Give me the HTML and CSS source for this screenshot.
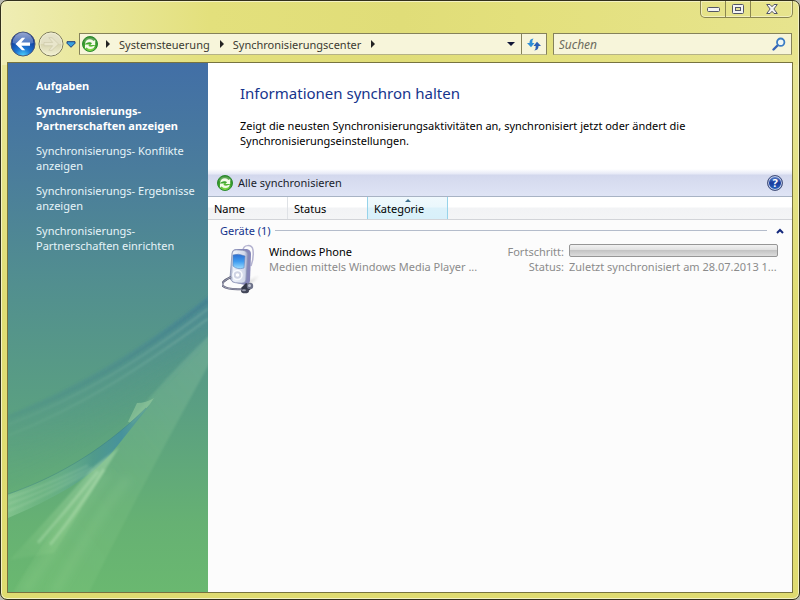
FILE: index.html
```
<!DOCTYPE html>
<html lang="de">
<head>
<meta charset="utf-8">
<title>Synchronisierungscenter</title>
<meta name="viewport" content="width=device-width, initial-scale=1">
<link rel="stylesheet" href="styles.css">
</head>
<body>
<svg width="0" height="0" class="defs" aria-hidden="true">
  <defs>
    <radialGradient id="green" cx=".5" cy=".9" r=".9"><stop offset="0" stop-color="#8fe04a"/><stop offset=".5" stop-color="#3fa62c"/><stop offset="1" stop-color="#2c8427"/></radialGradient>
    <symbol id="sync" viewBox="0 0 16 16">
      <circle cx="8" cy="8" r="7.500" fill="url(#green)" stroke="#2b8a30"/>
      <path d="M2 6a6.300 6.300 0 0 1 12 0Q8 8 2 6z" fill="#fff" opacity=".22"/>
      <path d="M3 8Q3.500 3.500 8 3.300 10.300 3.400 11.500 5L13.200 4V9H8.300L10 7.300Q8.500 5.300 6.200 6.200 4.500 7 3 8z" fill="#f6fbe8"/>
      <path d="M13 9.500Q12 13 8.500 13 6 13 4.600 11.500L3 12.700V8.500H7.600L6.300 9.700Q8 11.200 10 10.500 11.500 10 13 9.500z" fill="#f6fbe8"/>
    </symbol>
  </defs>
</svg>
<div class="window">
  <header class="titlebar">
    <div class="controls">
      <button class="control" aria-label="Minimieren"><svg width="13" height="6" viewBox="0 0 13 6"><rect x=".5" y="1.500" width="12" height="4" rx="1" fill="#f4f4f4" stroke="#535666"/></svg></button>
      <button class="control" aria-label="Maximieren"><svg width="12" height="10" viewBox="0 0 12 10"><rect x=".5" y=".5" width="11" height="9" rx="1" fill="#f4f4f4" stroke="#535666"/><rect x="3.500" y="3.500" width="5" height="3" fill="#e5e299" stroke="#535666"/></svg></button>
      <button class="control close" aria-label="Schließen"><svg width="12" height="10" viewBox="0 0 12 10"><path d="M.7.500H4L6 2.700 8 .5h3.300L7.900 5l3.400 4.500H8L6 7.300 4 9.500H.7L4.100 5z" fill="#f4f4f4" stroke="#535666"/></svg></button>
    </div>
  </header>
  <nav class="navbar">
    <div class="travel">
      <button class="round" aria-label="Zurück"><svg width="26" height="26" viewBox="0 0 26 26">
        <defs><radialGradient id="blue" cx=".5" cy="1" r=".85"><stop offset="0" stop-color="#4fd4ff"/><stop offset=".4" stop-color="#1c74d2"/><stop offset="1" stop-color="#0c2f8c"/></radialGradient><linearGradient id="gloss" x2="0" y2="1"><stop offset="0" stop-color="#dfe6f5"/><stop offset="1" stop-color="#5a80c8"/></linearGradient></defs>
        <circle cx="13" cy="13" r="12" fill="url(#blue)" stroke="#4c5878"/>
        <path d="M2.500 12a10.500 10.500 0 0 1 21 0Q13 15 2.500 12z" fill="url(#gloss)" opacity=".65"/>
        <path d="M5.500 13 12 6.700h3.200L11.300 11.500H20v3.200h-8.700l3.900 4.600H12z" fill="#fff"/></svg></button>
      <button class="round" aria-label="Vorwärts" disabled><svg width="26" height="26" viewBox="0 0 26 26">
        <defs><linearGradient id="pale" x2="0" y2="1"><stop offset="0" stop-color="#e6e4cc"/><stop offset=".48" stop-color="#e2dfc3"/><stop offset=".52" stop-color="#d8d5b0"/><stop offset="1" stop-color="#f4f2d4"/></linearGradient></defs>
        <circle cx="13" cy="13" r="12" fill="url(#pale)" stroke="#7d7b5c"/>
        <circle cx="13" cy="13" r="11" fill="none" stroke="#f4f2d6" opacity=".7"/>
        <path d="M20.500 13 14 6.700h-3.200l3.900 4.800H6v3.200h8.700l-3.900 4.600H14z" fill="#e9e6cc" stroke="#c9c6a6" stroke-width=".6"/></svg></button>
      <button class="recent" aria-label="Letzte Seiten"><svg width="10" height="7" viewBox="0 0 10 7"><path d="M1 .7h8v1.600L5 6.300 1 2.300z" fill="#38a0de" stroke="#1c3c78"/></svg></button>
    </div>
    <div class="address">
      <svg class="sync" width="16" height="16"><use href="#sync"/></svg>
      <span class="arrow"></span>
      <a href="#">Systemsteuerung</a>
      <span class="arrow"></span>
      <a href="#">Synchronisierungscenter</a>
      <span class="arrow"></span>
      <button class="drop" aria-label="Adressverlauf"></button>
      <button class="refresh" aria-label="Aktualisieren"><svg width="14" height="13" viewBox="0 0 14 13"><path d="M6.500.5Q2.300.800 2.500 5H0L4 9.300 7.500 5H5.300Q5 2 6.500.500z" fill="#2f8fd8"/><path d="M7.300 12.500Q11.700 12 11.500 8H14L10 3.700 6.500 8H8.700Q9 11 7.300 12.500z" fill="#2b5fb4"/></svg></button>
    </div>
    <form class="search">
      <input type="search" placeholder="Suchen" aria-label="Suchen">
      <button type="button" aria-label="Suche starten"><svg width="14" height="14" viewBox="0 0 14 14"><path d="M1.500 12.500 6 8" stroke="#3764b4" stroke-width="2.400" stroke-linecap="round"/><circle cx="8.700" cy="5.200" r="3.700" fill="#eef6f4" stroke="#3b7cc4" stroke-width="1.800"/></svg></button>
    </form>
  </nav>
  <div class="client">
    <aside class="tasks">
      <svg class="aurora" viewBox="0 0 200 320" preserveAspectRatio="none" aria-hidden="true">
        <defs>
          <linearGradient id="a1" gradientUnits="userSpaceOnUse" x1="90" y1="84" x2="128" y2="150"><stop offset="0" stop-color="#47839a" stop-opacity=".65"/><stop offset=".35" stop-color="#4c8c94" stop-opacity=".4"/><stop offset="1" stop-color="#4f9687" stop-opacity="0"/></linearGradient>
          <linearGradient id="fade" x1="1" x2="0"><stop offset="0" stop-color="#fff"/><stop offset=".45" stop-color="#999"/><stop offset="1" stop-color="#444"/></linearGradient>
          <mask id="m1"><rect width="200" height="320" fill="url(#fade)"/></mask>
          <linearGradient id="a2" x1="1" y1="0" x2="0" y2="1"><stop offset="0" stop-color="#aee0b4" stop-opacity=".22"/><stop offset=".5" stop-color="#b4e6a4" stop-opacity=".1"/><stop offset="1" stop-color="#b4e6a4" stop-opacity=".08"/></linearGradient>
          <linearGradient id="a3" x1="1" x2="0"><stop offset="0" stop-color="#5a9f98" stop-opacity=".6"/><stop offset=".2" stop-color="#46929c"/><stop offset=".4" stop-color="#4b9690" stop-opacity=".75"/><stop offset=".75" stop-color="#7cc09a" stop-opacity=".3"/><stop offset="1" stop-color="#a8dcae" stop-opacity=".4"/></linearGradient>
          <linearGradient id="a4" gradientUnits="userSpaceOnUse" x1="110" y1="176" x2="25" y2="285"><stop offset="0" stop-color="#a0d4a6" stop-opacity=".65"/><stop offset="1" stop-color="#a5dc99" stop-opacity=".1"/></linearGradient>
          <filter id="soft"><feGaussianBlur stdDeviation="1"/></filter>
          <filter id="softer" x="-50%" y="-50%" width="200%" height="200%"><feGaussianBlur stdDeviation="4"/></filter>
        </defs>
        <g mask="url(#m1)">
          <path d="M202 20C130 78 70 112 -2 142V216C70 184 150 126 202 64z" fill="url(#a1)" filter="url(#soft)"/>
          <path d="M200 26C130 82 70 118 0 144" fill="none" stroke="#3a7889" stroke-opacity=".4" stroke-width="3" filter="url(#soft)"/>
          <path d="M200 34C130 88 70 124 0 151M200 44C130 96 70 134 0 162" fill="none" stroke="#a7d5c1" stroke-opacity=".25" stroke-width="2" filter="url(#soft)"/>
        </g>
        <path d="M202 60C140 120 90 180 4 322H80C120 240 160 165 202 88z" fill="url(#a2)" filter="url(#soft)"/>
        <path d="M100 200C70 240 40 285 16 320M120 205C90 240 65 290 46 320" fill="none" stroke="#a9dfa0" stroke-opacity=".14" stroke-width="9" filter="url(#softer)"/>
        <path d="M120 148 129 129Q138 129 146 124L142 130 125 150z" fill="#9bcda0" opacity=".55"/>
        <path d="M121 150C80 186 40 207 0 221V245C45 226 86 204 108 174L142 131z" fill="url(#a3)"/>
        <path d="M138 134C90 182 40 207 0 221" fill="none" stroke="#2f7583" stroke-opacity=".35"/>
        <path d="M80 192Q35 214 0 225M84 194Q35 219 0 231M86 196Q35 224 0 238" fill="none" stroke="#c5e6c2" stroke-opacity=".28" stroke-width="1.500" filter="url(#soft)"/>
        <path d="M111 174 86 193Q45 240 2 287L46 280z" fill="url(#a4)" filter="url(#soft)"/>
        <path d="M90 198Q60 235 30 270M96 196Q68 240 42 272" fill="none" stroke="#c7ebc2" stroke-opacity=".32" stroke-width="3" filter="url(#soft)"/>
      </svg>
      <h2>Aufgaben</h2>
      <ul>
        <li><a class="current" href="#">Synchronisierungs-Partnerschaften anzeigen</a></li>
        <li><a href="#">Synchronisierungs- Konflikte anzeigen</a></li>
        <li><a href="#">Synchronisierungs- Ergebnisse anzeigen</a></li>
        <li><a href="#">Synchronisierungs-Partnerschaften einrichten</a></li>
      </ul>
    </aside>
    <main>
      <section class="intro">
        <h1>Informationen synchron halten</h1>
        <p>Zeigt die neusten Synchronisierungsaktivitäten an, synchronisiert jetzt oder ändert die Synchronisierungseinstellungen.</p>
      </section>
      <div class="toolbar">
        <button class="command"><svg width="16" height="16"><use href="#sync"/></svg>Alle synchronisieren</button>
        <button class="help" aria-label="Hilfe">?</button>
      </div>
      <div class="columns">
        <button>Name</button>
        <button>Status</button>
        <button class="sorted">Kategorie</button>
      </div>
      <section class="group">
        <div class="group-head">
          <h3>Geräte (1)</h3>
          <button aria-label="Gruppe reduzieren"><svg width="8" height="6" viewBox="0 0 8 6"><path d="M1 5 4 2l3 3" fill="none" stroke="#14297c" stroke-width="2"/></svg></button>
        </div>
        <article class="device">
          <svg class="phone" width="38" height="50" viewBox="0 0 38 50" aria-hidden="true">
            <defs>
              <linearGradient id="body"><stop offset="0" stop-color="#8f98b8"/><stop offset=".2" stop-color="#eef2fa"/><stop offset=".8" stop-color="#d3d9ea"/><stop offset="1" stop-color="#9298bf"/></linearGradient>
              <linearGradient id="screen" x2="0" y2="1"><stop offset="0" stop-color="#2d6ed0"/><stop offset=".5" stop-color="#3f9cf0"/><stop offset="1" stop-color="#9bdcff"/></linearGradient>
              <filter id="shade"><feGaussianBlur stdDeviation="1.500"/></filter>
            </defs>
            <path d="M26 38 37 32 30 38 24 42z" fill="#999" opacity=".5" filter="url(#shade)"/>
            <path d="M21 7C21 0 30 0 31 6Q32 14 29 22" fill="none" stroke="#b4b3d0" stroke-width="1.500"/>
            <path d="M10 8Q11 5 15 5H25Q29 6 29 10L28 37Q27 41 23 41L10 38z" fill="#8586b8"/>
            <path d="M10 9Q11 5 17 6 25 6 26 10L24 36Q23 40 17 39 9 39 8 34z" fill="url(#body)" stroke="#8c94b4" stroke-width=".8"/>
            <path d="M11 11Q16 9 23 12L22 24Q15 26 11 22z" fill="url(#screen)" stroke="#5d7fb8" stroke-width=".6"/>
            <circle cx="15.500" cy="31" r="4.500" fill="#cfd4e4" stroke="#fafcff" stroke-width="1.500"/><circle cx="15.500" cy="31" r="1.800" fill="#fff"/>
            <path d="M9 33Q-2 38 1 42 5 46 22 45" fill="none" stroke="#53566c" stroke-width="2"/>
            <path d="M9 33Q-2 38 1 42 5 46 22 45" fill="none" stroke="#c8c9dc" stroke-width=".7"/>
            <path d="M19 44 24 39 30 42 28 46 22 48z" fill="#343849"/><circle cx="28" cy="42" r="3.200" fill="#6e738a"/><circle cx="27.500" cy="41.500" r="1.500" fill="#c2c6d4"/>
            <ellipse cx="23" cy="47" rx="4" ry="2.300" fill="#424658"/><ellipse cx="22" cy="46.300" rx="2" ry="1" fill="#9a9eb0"/>
          </svg>
          <div class="about">
            <h4>Windows Phone</h4>
            <p>Medien mittels Windows Media Player ...</p>
          </div>
          <div class="state">
            <label for="progress">Fortschritt:</label>
            <progress id="progress" value="0" max="100"></progress>
            <span class="key">Status:</span>
            <span class="value">Zuletzt synchronisiert am 28.07.2013 1...</span>
          </div>
        </article>
      </section>
    </main>
  </div>
</div>
</body>
</html>
```
FILE: styles.css
```
* { box-sizing: border-box; }
body {
  margin: 0;
  background: #b9b9b0;
  font: 11px/15px "Noto Sans", "Open Sans", sans-serif;
  color: #000;
}
h1, h2, h3, h4, p, ul { margin: 0; padding: 0; font-weight: normal; font-size: inherit; }
ul { list-style: none; }
a { color: inherit; text-decoration: none; }
button { margin: 0; padding: 0; border: 0; background: none; font: inherit; color: inherit; }
svg { display: block; flex: none; }
.defs { position: absolute; }

.window {
  min-height: 100vh;
  display: flex;
  flex-direction: column;
  padding: 0 6px 6px;
  border: 1px solid #32301c;
  border-radius: 7px;
  box-shadow: inset 0 0 0 1px #f4f2c4;
  background:
    linear-gradient(90deg, #efedb4 0, #e8e696 110px, #e3e07c 210px, #e0dd78 400px, #e3e07c 520px, #e7e48e 100%) top / 100% 64px no-repeat,
    linear-gradient(#e8e696 60px, #e0dd74 50%, #dfdb70);
}

.titlebar { height: 32px; display: flex; justify-content: flex-end; }
.controls {
  display: flex;
  height: 17px;
  border: 1px solid #8a8650;
  border-top: 0;
  border-radius: 0 0 5px 5px;
  box-shadow: inset 0 0 0 1px #f2f0bc;
}
.control { width: 25px; display: grid; place-items: center; border-right: 1px solid #8a8650; }
.control.close { width: 41px; border-right: 0; }

.navbar { display: flex; height: 22px; align-items: stretch; margin-bottom: 7px; padding: 0 1px 0 3px; }
.travel { display: flex; align-items: center; width: 69px; gap: 2px; }
.round, .recent { flex: none; }
.address, .search {
  display: flex;
  align-items: center;
  border: 1px solid #85825a;
  border-bottom-color: #b5b286;
  background: #f7f5da;
  color: #3c3b32;
}
.address { flex: 467 1 0; padding-left: 2px; margin-right: 6px; }
.search { flex: 239 1 0; }
.arrow {
  width: 0; height: 0;
  border: 4px solid transparent;
  border-left-color: #222;
  border-right: 0;
  margin: 0 9px 0 8px;
}
.address a + .arrow { margin-left: 10px; }
.drop { width: 0; height: 0; margin: 0 6px 0 auto; border: 4px solid transparent; border-top-color: #111637; border-bottom: 0; }
.refresh { align-self: stretch; width: 25px; display: grid; place-items: center; border-left: 1px solid #85825a; }
.search input {
  flex: 1; min-width: 0;
  border: 0; padding: 0 5px; outline: 0;
  background: none;
  font: italic 12px/15px "Noto Sans", sans-serif;
}
.search input::placeholder { color: #6d6c5e; opacity: 1; }
.search button { margin-right: 5px; }

.client { flex: 1; display: flex; border: 1px solid #77733f; background: #fcfcfc; }
.tasks {
  position: relative;
  flex: none;
  width: 200px;
  padding: 15px 8px 0 28px;
  background: linear-gradient(#426fa6 0, #4a7c9c 20%, #528f8f 42%, #5a9f82 65%, #66b173 87%, #6ab870 100%);
  color: #e6f4f8;
}
.aurora { position: absolute; left: 0; bottom: 0; width: 100%; height: 60%; }
.tasks h2, .tasks ul { position: relative; }
.tasks h2, .current { font-weight: bold; color: #fff; }
.tasks h2 { margin-bottom: 10px; }
.tasks li { margin-bottom: 10px; }

main { flex: 1; min-width: 0; }
.intro { padding: 20px 32px 21px; background: #fff; }
.intro h1 { font-size: 15px; line-height: 20px; color: #15348c; margin-bottom: 15px; }
.intro p { max-width: 480px; }
.toolbar {
  display: flex;
  align-items: center;
  justify-content: space-between;
  height: 28px;
  padding: 0 9px;
  border-bottom: 1px solid #a8b3c4;
  background: linear-gradient(#fff 0, #e6e9f6 5px, #d3d8ed 6px, #dfe4f5 100%);
}
.command { display: flex; align-items: center; gap: 5px; color: #1a1d2c; }
.help {
  width: 16px; height: 16px;
  border: 1px solid #46527c;
  border-radius: 50%;
  box-shadow: inset 0 0 0 1px #c5cfe8;
  background: linear-gradient(#6187cc, #173a9c 50%, #2c6ac4);
  font-weight: bold;
  line-height: 14px;
  color: #fff;
}
.columns {
  display: flex;
  height: 23px;
  border-bottom: 1px solid #d2d4d8;
  background: linear-gradient(#fff 0, #fff 10px, #f2f3f5 11px, #f4f5f6 100%);
}
.columns button { width: 80px; padding: 0 6px; text-align: left; border-right: 1px solid #dfe2e6; }
.columns .sorted {
  position: relative;
  width: 81px;
  margin-left: -1px;
  border: solid #96d3ea;
  border-width: 0 1px;
  background: linear-gradient(#f0f9fd 0, #eaf7fc 10px, #dbf1fa 11px, #d8f0fa 100%);
}
.sorted::before {
  content: "";
  position: absolute;
  top: 2px;
  left: calc(50% - 3px);
  border: 3px solid transparent;
  border-bottom-color: #3c6f8e;
  border-top: 0;
}

.group { padding: 3px 8px 0 12px; }
.group-head { display: flex; align-items: center; gap: 4px; color: #15348c; }
.group-head::after { content: ""; flex: 1; height: 1px; background: #b4bccb; order: 1; }
.group-head button { order: 2; margin-left: 5px; }
.device { display: flex; padding: 6px 6px 0 2px; color: #8b8b8b; }
.phone { margin-right: 9px; }
.about { flex: 216 1 0; min-width: 0; }
.about h4 { color: #000; }
.about p, .value { overflow: hidden; white-space: nowrap; text-overflow: ellipsis; }
.state {
  flex: 293 1 0;
  min-width: 0;
  display: grid;
  grid-template-columns: 79px 1fr;
  grid-auto-rows: 15px;
  column-gap: 5px;
  text-align: right;
}
.value { text-align: left; min-width: 0; }
progress {
  appearance: none;
  width: 100%;
  height: 13px;
  border: 1px solid #969696;
  border-radius: 2px;
  background: linear-gradient(#f2f2f2 0, #e0e0e0 45%, #c4c4c4 50%, #dcdcdc 100%);
}
progress::-webkit-progress-bar { background: none; }
progress::-webkit-progress-value { background: #3fc23f; }
```
